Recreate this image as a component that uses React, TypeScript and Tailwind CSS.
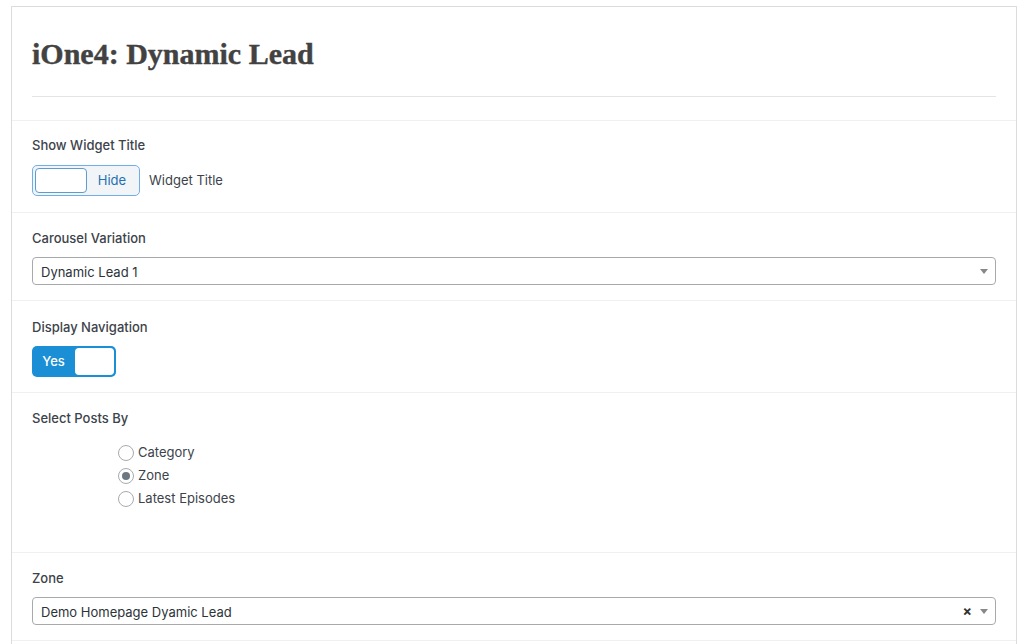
import React from "react";

const sans = { fontFamily: "Inter, 'Noto Sans', sans-serif" };

function Arrow() {
  return (
    <svg width="8" height="5" viewBox="0 0 8 5" className="shrink-0">
      <path d="M0 0 L8 0 L4 5 Z" fill="#888" />
    </svg>
  );
}

function Select({ value, clearable }: { value: string; clearable?: boolean }) {
  return (
    <div className="flex items-center h-[28px] border border-[#a7aaad] rounded-[4px] bg-white pl-[8px] pr-[7px]">
      <span className="flex-1 text-[13px] leading-[28px] pt-[2px] text-[#2c3338]">{value}</span>
      {clearable && (
        <span className="mr-[8px] text-[14px] font-bold leading-none text-[#333]">×</span>
      )}
      <Arrow />
    </div>
  );
}

function Section({
  label,
  children,
  className = "",
}: {
  label: string;
  children: React.ReactNode;
  className?: string;
}) {
  return (
    <div className={"border-t border-[#f0f0f1] px-[20px] " + className}>
      <div className="text-[13px] leading-[18px] font-medium text-[#3c434a]">{label}</div>
      {children}
    </div>
  );
}

export default function App() {
  return (
    <div className="w-[1024px] h-[644px] overflow-hidden bg-white pt-[6px] pl-[11px] pr-[7px]" style={sans}>
      <div className="border border-b-0 border-[#dcdcde] h-[700px]">
        {/* Header */}
        <div className="px-[20px] pt-[30px] pb-[23px]">
          <h1
            className="text-[30px] leading-[34px] font-bold text-[#424242] pb-[25px] border-b border-[#e2e4e7]"
            style={{ fontFamily: "'Liberation Serif', serif", WebkitTextStroke: "0.4px #424242" }}
          >
            iOne4: Dynamic Lead
          </h1>
        </div>

        <Section label="Show Widget Title" className="pt-[15px] pb-[16px]">
          <div className="flex items-center mt-[11px]">
            <div className="flex items-center w-[108px] h-[31px] rounded-[5px] border border-[#72aee6] bg-[#f2f5f7] p-[2px]">
              <div className="w-[52px] h-full rounded-[4px] border border-[#5b9dd0] bg-white" />
              <span className="flex-1 text-center text-[13px] text-[#2271b1]">Hide</span>
            </div>
            <span className="ml-[9px] text-[13px] text-[#3c434a]">Widget Title</span>
          </div>
        </Section>

        <Section label="Carousel Variation" className="pt-[16px] pb-[15px]">
          <div className="mt-[10px]">
            <Select value="Dynamic Lead 1" />
          </div>
        </Section>

        <Section label="Display Navigation" className="pt-[17px] pb-[15px]">
          <div className="flex items-center mt-[10px] w-[84px] h-[31px] rounded-[5px] bg-[#1a8fd5] p-[2px]">
            <span className="flex-1 text-center text-[13px] font-medium text-white pr-[2px]">Yes</span>
            <div className="w-[39px] h-full rounded-[4px] bg-white" />
          </div>
        </Section>

        <Section label="Select Posts By" className="pt-[16px] pb-[42px]">
          <div className="mt-[14px] pl-[86px] flex flex-col">
            {["Category", "Zone", "Latest Episodes"].map((o) => (
              <label key={o} className="flex items-center h-[23px] text-[13px] text-[#3c434a]">
                <span className="w-[16px] h-[16px] rounded-full border border-[#a7aaad] bg-white flex items-center justify-center mr-[4px]">
                  {o === "Zone" && <span className="w-[8px] h-[8px] rounded-full bg-[#6c7781]" />}
                </span>
                {o}
              </label>
            ))}
          </div>
        </Section>

        <Section label="Zone" className="pt-[16px] pb-[15px]">
          <div className="mt-[10px]">
            <Select value="Demo Homepage Dyamic Lead" clearable />
          </div>
        </Section>
        <div className="border-t border-[#f0f0f1]" />
      </div>
    </div>
  );
}
